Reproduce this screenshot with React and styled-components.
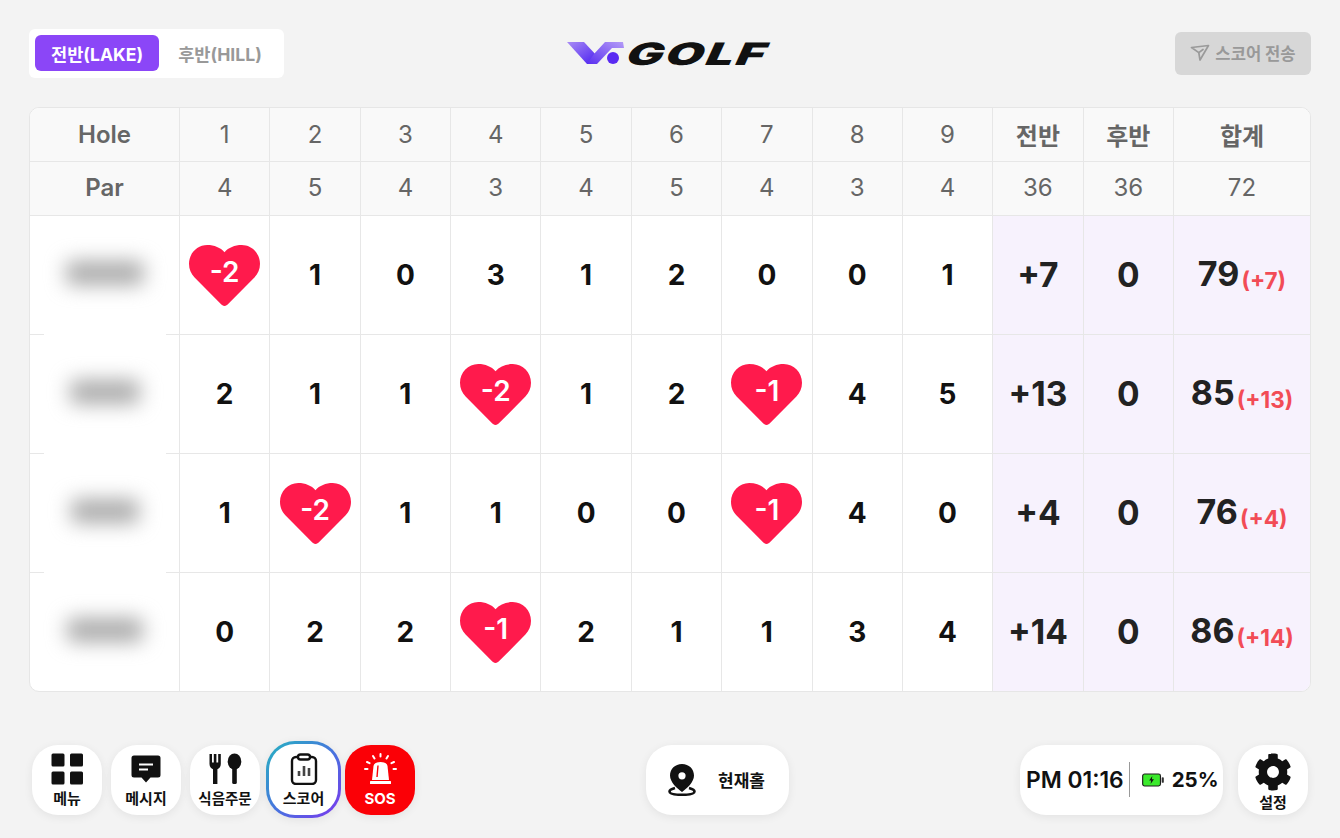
import React from "react";
import styled, { createGlobalStyle } from "styled-components";
import { FaCog } from "react-icons/fa";

const GlobalStyle = createGlobalStyle`
  html, body {
    margin: 0;
    padding: 0;
    background: #f3f3f3;
    font-family: Inter, "Noto Sans CJK KR", "Liberation Sans", sans-serif;
  }
  * { box-sizing: border-box; }
`;

const Page = styled.div`
  width: 1340px;
  height: 838px;
  padding: 29px 29px 0 29px;
  overflow: hidden;
  background: #f3f3f3;
`;

const Header = styled.header`
  display: grid;
  grid-template-columns: 1fr auto 1fr;
  align-items: center;
  height: 49px;
  margin-bottom: 29px;
`;

const Tabs = styled.div`
  display: flex;
  align-items: center;
  width: 255px;
  height: 49px;
  padding: 0 6px;
  background: #fff;
  border-radius: 6px;
`;

const Tab = styled.div`
  display: flex;
  flex: none;
  align-items: center;
  justify-content: center;
  width: ${p => (p.$active ? "124px" : "122px")};
  height: 36px;
  margin-top: -1px;
  border-radius: 6px;
  font-size: 17.6px;
  font-weight: 700;
  color: ${p => (p.$active ? "#fff" : "#999")};
  background: ${p => (p.$active ? "#8b46f7" : "transparent")};
`;

const Logo = styled.div`
  display: flex;
  align-items: center;
  gap: 1px;
  width: 206px;
  height: 30px;
`;

const LogoWord = styled.span`
  display: inline-block;
  font-size: 31px;
  line-height: 30px;
  font-weight: 900;
  letter-spacing: 1.5px;
  color: #111;
  transform-origin: left center;
  transform: scaleX(1.58) skewX(-16deg);
`;

const SendButton = styled.button`
  justify-self: end;
  display: flex;
  align-items: center;
  justify-content: center;
  gap: 5px;
  width: 136px;
  height: 43px;
  margin-top: -1px;
  border: 0;
  border-radius: 6px;
  background: #d7d7d7;
  color: #999;
  font-family: inherit;
  font-size: 16.6px;
  font-weight: 700;
`;

const ScoreTable = styled.div`
  display: grid;
  grid-template-columns: 150px repeat(11, 90.36px) 1fr;
  grid-template-rows: 54px 54px 119px 119px 119px 118px;
  width: 1282px;
  height: 585px;
  background: #fff;
  border: 1px solid #e6e6e6;
  border-radius: 10px;
  overflow: hidden;
`;

const Cell = styled.div`
  display: flex;
  align-items: center;
  justify-content: center;
  position: relative;
  border-right: ${p => (p.$end ? "0" : "1px solid #e7e7e7")};
  border-bottom: ${p => (p.$bottom ? "0" : "1px solid #e7e7e7")};
`;

const HeadCell = styled(Cell)`
  padding-bottom: ${p => (p.$par ? "2px" : "0")};
  background: #f9f9f9;
  color: #666;
  font-size: 24px;
  font-weight: ${p => (p.$strong ? 600 : 400)};
`;

const NameCell = styled(Cell)`
  &::after {
    content: "";
    display: ${p => (p.$bottom ? "none" : "block")};
    position: absolute;
    left: 14px;
    width: 122px;
    bottom: -1px;
    height: 1px;
    background: #fff;
  }
`;

const BlurName = styled.div`
  width: ${p => p.$width}px;
  height: 24px;
  margin-top: -4px;
  background: #aaa;
  border-radius: 6px;
  filter: blur(10px);
`;

const ScoreCell = styled(Cell)`
  color: #111;
  font-size: 28px;
  font-weight: 700;
`;

const SumCell = styled(Cell)`
  background: #f7f2fd;
  color: #222;
  font-size: 33.5px;
  font-weight: 700;
`;

const Total = styled.span`
  display: inline-flex;
  align-items: baseline;
  gap: 2px;
  margin-top: -3px;
  font-size: 34px;
`;

const TotalDiff = styled.span`
  position: relative;
  top: 3px;
  font-size: 22.5px;
  font-weight: 700;
  color: #f24c56;
`;

const Heart = styled.div`
  position: relative;
  display: flex;
  align-items: center;
  justify-content: center;
  width: 71px;
  height: 61px;
  padding-bottom: 6px;
  color: #fff;
  font-size: 28px;
  font-weight: 600;
  svg {
    position: absolute;
    inset: 0;
  }
  span {
    position: relative;
  }
`;

const Footer = styled.footer`
  display: flex;
  align-items: center;
  justify-content: space-between;
  height: 77px;
  margin-top: 49px;
  padding: 0 3px;
`;

const Group = styled.div`
  display: flex;
  align-items: center;
  gap: ${p => p.$gap}px;
`;

const NavButton = styled.div`
  display: flex;
  flex-direction: column;
  align-items: center;
  width: 70px;
  height: 70px;
  padding-top: 8px;
  background: ${p => (p.$red ? "#fb0006" : "#fff")};
  color: ${p => (p.$red ? "#fff" : "#111")};
  border-radius: 26px;
  box-shadow: 0 2px 10px rgba(0, 0, 0, 0.07);
  font-size: ${p => p.$fontSize || 15}px;
  font-weight: 700;
  line-height: 15px;
  white-space: nowrap;
`;

const IconSlot = styled.div`
  display: flex;
  align-items: center;
  justify-content: center;
  height: ${p => (p.$tall ? 38 : 32)}px;
  margin-bottom: ${p => (p.$tall ? 4 : 6)}px;
`;

const ScoreButton = styled(NavButton)`
  width: 75px;
  height: 77px;
  margin: 0 -5px 0 -3px;
  padding-top: 9px;
  border: 3px solid transparent;
  border-radius: 29px;
  background:
    linear-gradient(#fff, #fff) padding-box,
    linear-gradient(135deg, #25b4c0, #4a6fe0 55%, #7c36ee) border-box;
`;

const PillButton = styled.div`
  display: flex;
  align-items: center;
  gap: ${p => p.$gap || 0}px;
  height: 70px;
  width: ${p => p.$width}px;
  padding: ${p => p.$padding};
  background: #fff;
  border-radius: 26px;
  box-shadow: 0 2px 10px rgba(0, 0, 0, 0.07);
  color: #111;
`;

const PinLabel = styled.span`
  font-size: 17px;
  font-weight: 700;
`;

const StatusText = styled.span`
  font-size: ${p => p.$size}px;
  font-weight: ${p => p.$weight || 600};
  white-space: nowrap;
`;

const Divider = styled.div`
  width: 1px;
  height: 35px;
  margin: 0 12px 0 5px;
  background: #999;
`;

const holes = [1, 2, 3, 4, 5, 6, 7, 8, 9];
const pars = [4, 5, 4, 3, 4, 5, 4, 3, 4];

const players = [
  { blur: 78, scores: [-2, 1, 0, 3, 1, 2, 0, 0, 1], front: "+7", total: 79, diff: "+7" },
  { blur: 70, scores: [2, 1, 1, -2, 1, 2, -1, 4, 5], front: "+13", total: 85, diff: "+13" },
  { blur: 68, scores: [1, -2, 1, 1, 0, 0, -1, 4, 0], front: "+4", total: 76, diff: "+4" },
  { blur: 76, scores: [0, 2, 2, -1, 2, 1, 1, 3, 4], front: "+14", total: 86, diff: "+14" }
];

const HeartShape = () => (
  <svg width="71" height="61" viewBox="0 0 70 60">
    <path
      fill="#ff1a4c"
      d="M35 60C33.4 60 32.4 59.2 31.4 58.2L5.5 32C2 28.5 0 24 0 18.5 0 8.3 8 0 18 0 25 0 31 2.6 35 7 39 2.6 45 0 52 0 62 0 70 8.3 70 18.5 70 24 68 28.5 64.5 32L38.6 58.2C37.6 59.2 36.6 60 35 60Z"
    />
  </svg>
);

const LogoMark = () => (
  <svg width="60" height="25" viewBox="0 0 60 25">
    <defs>
      <linearGradient id="vLeft" x1="0" y1="0" x2="1" y2="1">
        <stop offset="0" stopColor="#a98cf5" />
        <stop offset="1" stopColor="#4a1ff0" />
      </linearGradient>
      <linearGradient id="vRight" x1="0" y1="1" x2="1" y2="0">
        <stop offset="0" stopColor="#5a2ff0" />
        <stop offset="1" stopColor="#b49bf7" />
      </linearGradient>
    </defs>
    <path fill="url(#vLeft)" d="M0 1H17L30 15 24 23H20Z" />
    <path fill="url(#vRight)" d="M20 23H30L45 7H57L56 1H38L27 13Z" />
    <circle cx="46" cy="17" r="6" fill="#5a2af2" />
  </svg>
);

const SendIcon = () => (
  <svg width="20" height="18" viewBox="0 0 20 18" fill="none" stroke="#9a9a9a" strokeWidth="1.7" strokeLinejoin="round" strokeLinecap="round">
    <path d="M1.5 3.5L18.5 1.5 10 16 8.8 8.6Z" />
    <path d="M8.8 8.6L13 5.5" />
  </svg>
);

const MenuIcon = () => (
  <svg width="33" height="32" viewBox="0 0 33 32" fill="#111">
    <rect x="0.5" y="0.5" width="13" height="13" rx="1.5" />
    <rect x="19" y="0.5" width="13" height="13" rx="1.5" />
    <rect x="0.5" y="18.5" width="13" height="13" rx="1.5" />
    <rect x="19" y="18.5" width="13" height="13" rx="1.5" />
  </svg>
);

const MessageIcon = () => (
  <svg width="30" height="28" viewBox="0 0 30 28">
    <path fill="#111" d="M3 0.5H27A2.5 2.5 0 0 1 29.5 3V20A2.5 2.5 0 0 1 27 22.5H19.5L15 27.5 10.5 22.5H3A2.5 2.5 0 0 1 0.5 20V3A2.5 2.5 0 0 1 3 0.5Z" />
    <path stroke="#fff" strokeWidth="2" d="M8 9.5H22M8 14.5H17" />
  </svg>
);

const FoodIcon = () => (
  <svg width="33" height="32" viewBox="0 0 33 32" fill="#111">
    <path d="M0.5 1H3V9.5H4.8V1H7.4V9.5H9.2V1H11.8V11C11.8 14 10 15.5 8.4 16.2V31H4V16.2C2.4 15.5 0.5 14 0.5 11Z" />
    <ellipse cx="25.5" cy="8.5" rx="6.8" ry="8" />
    <rect x="23.2" y="14" width="4.6" height="17" rx="1.5" />
  </svg>
);

const ClipboardIcon = () => (
  <svg width="28" height="32" viewBox="0 0 28 32" fill="none" stroke="#111" strokeWidth="2.4">
    <rect x="2" y="4" width="24" height="27" rx="4" />
    <rect x="8" y="1.5" width="12" height="5" rx="2.5" fill="#fff" />
    <path stroke="#444" strokeWidth="2.6" d="M9 23V18M14 23V13M19 23V15" />
  </svg>
);

const SirenIcon = () => (
  <svg width="33" height="32" viewBox="0 0 33 32" fill="#fff">
    <path d="M8 27L9.5 13C9.9 10.6 12.5 9 16.5 9S23.1 10.6 23.5 13L25 27Z" />
    <rect x="6" y="28" width="21" height="3" rx="0.5" />
    <path stroke="#fff" strokeWidth="2" strokeLinecap="round" d="M16.5 1V3.5M9 3L10.5 5.5M24 3L22.5 5.5M3 9L5.5 10.2M30 9L27.5 10.2M1 16H3.5M32 16H29.5" />
    <path stroke="#fb0006" strokeWidth="1.4" fill="none" d="M14 12.5L13 24" />
  </svg>
);

const PinIcon = () => (
  <svg width="28" height="32" viewBox="0 0 28 32">
    <path
      fill="#111"
      fillRule="evenodd"
      d="M14 0C21 0 26 5 26 11.5 26 18 19 24.5 14 28 9 24.5 2 18 2 11.5 2 5 7 0 14 0ZM14 8.2A3.6 3.6 0 1 0 14 15.4 3.6 3.6 0 1 0 14 8.2Z"
    />
    <path fill="none" stroke="#111" strokeWidth="2.6" d="M7 24C3.5 25 1.5 26 1.5 27.5 1.5 29.8 7 30.8 14 30.8S26.5 29.8 26.5 27.5C26.5 26 24.5 25 21 24" />
  </svg>
);

const BatteryIcon = () => (
  <svg width="22" height="14" viewBox="0 0 23 14" style={{ marginRight: 8, flex: "none" }}>
    <rect x="0.7" y="0.7" width="18.6" height="12.6" rx="2" fill="#3bea2c" stroke="#1d1d1d" strokeWidth="1.2" />
    <rect x="20.6" y="4" width="2.2" height="6" rx="1" fill="#333" />
    <path fill="#111" d="M10.8 2.8L7.5 7.6H9.6L9 11.2 12.5 6.2H10.3Z" />
  </svg>
);

const HeadRow = ({ title, values, front, back, total }) => {
  const isPar = title === "Par";
  return (
    <>
      <HeadCell $strong $par={isPar}>{title}</HeadCell>
      {values.map((v, i) => (
        <HeadCell key={i} $par={isPar}>{v}</HeadCell>
      ))}
      <HeadCell $strong={!isPar} $par={isPar}>{front}</HeadCell>
      <HeadCell $strong={!isPar} $par={isPar}>{back}</HeadCell>
      <HeadCell $end $strong={!isPar} $par={isPar}>{total}</HeadCell>
    </>
  );
};

const PlayerRow = ({ player, last }) => (
  <>
    <NameCell $bottom={last}>
      <BlurName $width={player.blur} />
    </NameCell>
    {player.scores.map((s, i) => (
      <ScoreCell key={i} $bottom={last}>
        {s < 0 ? (
          <Heart>
            <HeartShape />
            <span>{s}</span>
          </Heart>
        ) : (
          s
        )}
      </ScoreCell>
    ))}
    <SumCell $bottom={last}>{player.front}</SumCell>
    <SumCell $bottom={last}>0</SumCell>
    <SumCell $bottom={last} $end>
      <Total>
        {player.total}
        <TotalDiff>({player.diff})</TotalDiff>
      </Total>
    </SumCell>
  </>
);

export default function App() {
  return (
    <Page>
      <GlobalStyle />
      <Header>
        <Tabs>
          <Tab $active>전반(LAKE)</Tab>
          <Tab>후반(HILL)</Tab>
        </Tabs>
        <Logo>
          <LogoMark />
          <LogoWord>GOLF</LogoWord>
        </Logo>
        <SendButton>
          <SendIcon />
          스코어 전송
        </SendButton>
      </Header>

      <ScoreTable>
        <HeadRow title="Hole" values={holes} front="전반" back="후반" total="합계" />
        <HeadRow title="Par" values={pars} front={36} back={36} total={72} />
        {players.map((p, i) => (
          <PlayerRow key={i} player={p} last={i === players.length - 1} />
        ))}
      </ScoreTable>

      <Footer>
        <Group $gap={9}>
          <NavButton><IconSlot><MenuIcon /></IconSlot>메뉴</NavButton>
          <NavButton><IconSlot><MessageIcon /></IconSlot>메시지</NavButton>
          <NavButton $fontSize={14.5}><IconSlot><FoodIcon /></IconSlot>식음주문</NavButton>
          <ScoreButton><IconSlot><ClipboardIcon /></IconSlot>스코어</ScoreButton>
          <NavButton $red><IconSlot><SirenIcon /></IconSlot>SOS</NavButton>
        </Group>
        <PillButton $width={143} $gap={22} $padding="0 0 0 22px">
          <PinIcon />
          <PinLabel>현재홀</PinLabel>
        </PillButton>
        <Group $gap={15}>
          <PillButton $width={203} $padding="0 0 0 6px">
            <StatusText $size={22.8}>PM 01:16</StatusText>
            <Divider />
            <BatteryIcon />
            <StatusText $size={20.5} $weight={700}>25%</StatusText>
          </PillButton>
          <NavButton>
            <IconSlot $tall><FaCog size={38} /></IconSlot>
            설정
          </NavButton>
        </Group>
      </Footer>
    </Page>
  );
}
